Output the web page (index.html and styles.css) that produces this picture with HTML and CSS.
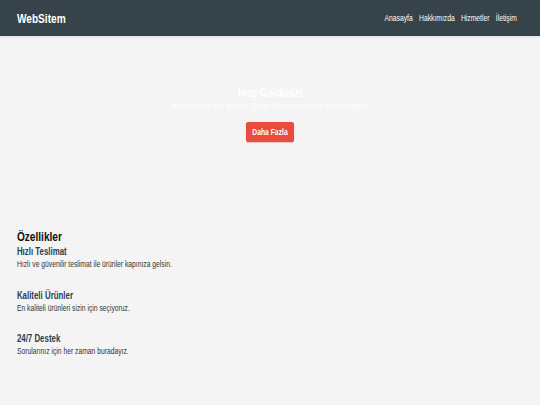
FILE: index.html
```html
<!DOCTYPE html>
<html lang="tr">
<head>
<meta charset="utf-8">
<title>WebSitem</title>
<link rel="stylesheet" href="styles.css">
</head>
<body>
<div class="page">
  <header class="site-header">
    <div class="logo">WebSitem</div>
    <nav class="nav">
      <a href="#">Anasayfa</a>
      <a href="#">Hakkımızda</a>
      <a href="#">Hizmetler</a>
      <a href="#">İletişim</a>
    </nav>
  </header>
  <section class="hero">
    <h2 class="hero-title">Hoş Geldiniz!</h2>
    <p class="hero-text">WebSitemize hoş geldiniz. En iyi deneyimi sunmak için buradayız.</p>
    <div class="hero-actions"><a class="btn" href="#">Daha Fazla</a></div>
  </section>
  <section class="features">
    <h2 class="features-title">Özellikler</h2>
    <div class="feature">
      <h3>Hızlı Teslimat</h3>
      <p>Hızlı ve güvenilir teslimat ile ürünler kapınıza gelsin.</p>
    </div>
    <div class="feature">
      <h3>Kaliteli Ürünler</h3>
      <p>En kaliteli ürünleri sizin için seçiyoruz.</p>
    </div>
    <div class="feature">
      <h3>24/7 Destek</h3>
      <p>Sorularınız için her zaman buradayız.</p>
    </div>
  </section>
</div>
</body>
</html>
```
FILE: styles.css
```css
html, body {
  margin: 0;
  padding: 0;
  background: #f4f4f4;
  overflow: hidden;
}
.page {
  width: 1280px;
  height: 720px;
  overflow: hidden;
  transform: scale(0.421875, 0.5625);
  transform-origin: 0 0;
  font-family: "Liberation Sans", Arial, sans-serif;
  color: #333;
}
.site-header {
  height: 64px;
  box-sizing: border-box;
  background: #36434b;
  display: flex;
  align-items: center;
  justify-content: space-between;
  padding: 0 55px 0 40px;
  box-shadow: 0 2px 4px rgba(0, 0, 0, 0.1);
}
.logo {
  font-size: 24px;
  font-weight: bold;
  color: #fff;
}
.nav {
  display: flex;
  gap: 15px;
}
.nav a {
  color: #fff;
  text-decoration: none;
  font-size: 16px;
}
.hero {
  text-align: center;
  padding: 87px 20px 154px;
}
.hero-title {
  margin: 0;
  font-size: 24px;
  color: #fff;
}
.hero-text {
  margin: 0;
  font-size: 16px;
  color: #fff;
}
.hero-actions {
  margin-top: 20px;
  display: flex;
  justify-content: center;
}
.btn {
  display: block;
  background: #e74c3c;
  color: #fff;
  text-decoration: none;
  padding: 9px 15px;
  border-radius: 5px;
  font-size: 16px;
  line-height: 18px;
  font-weight: bold;
}
.features {
  padding: 0 40px;
}
.features-title {
  margin: 0 0 2px;
  font-size: 24px;
  color: #111;
}
.feature {
  margin-bottom: 35px;
}
.feature h3 {
  margin: 0 0 2px;
  font-size: 18.72px;
  color: #2c3e50;
}
.feature p {
  margin: 0;
  font-size: 16px;
  color: #333;
}
```
